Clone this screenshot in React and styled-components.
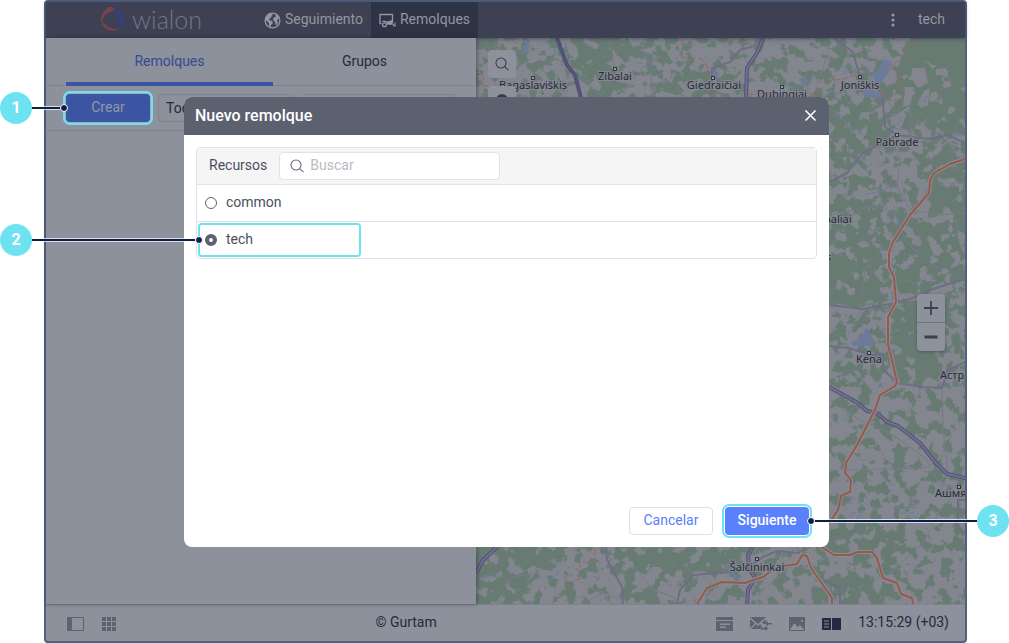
import React, { useState } from "react";
import styled, { createGlobalStyle, css } from "styled-components";

const GlobalStyle = createGlobalStyle`
  * { box-sizing: border-box; }
  body { margin: 0; background: #fff; font-family: Roboto, "Liberation Sans", sans-serif; font-size: 14px; line-height: 20px; color: #4a4f60; overflow-x: hidden; }
  button, input, select { font: inherit; margin: 0; }
  svg { display: block; }
`;

const cyan = "#6fe2f2";
const navy = "#0b1f4b";
const dim = "#8d919b";
const ink = "#232a3f";

/* ---------- frame ---------- */
const Window = styled.div`
  position: relative;
  display: flex;
  flex-direction: column;
  min-height: 100vh;
  margin: 0 42px 0 44px;
  border: 2px solid #50617f;
  border-radius: 4px;
  background: ${dim};
`;

const TopBar = styled.header`
  position: relative;
  z-index: 1;
  display: flex;
  align-items: stretch;
  height: 36px;
  padding: 0 20px 0 54px;
  background: #3d4153;
  box-shadow: 0 1px 4px rgba(30, 34, 50, 0.5);
  color: #9397a1;
`;

const Brand = styled.a`
  display: flex;
  align-items: center;
  gap: 8px;
  width: 156px;
  padding-bottom: 2px;
  color: #737783;
  font: 300 25px/34px Lato, sans-serif;
  text-decoration: none;
`;

const NavLink = styled.a`
  display: flex;
  align-items: center;
  gap: 4px;
  padding: 0 8px;
  color: inherit;
  text-decoration: none;
  background: ${(p) => (p.$active ? "#2e3346" : "transparent")};
`;

const NavText = styled.span`
  padding-bottom: 2px;
`;

const UserArea = styled.div`
  display: flex;
  align-items: center;
  gap: 23px;
  margin-left: auto;
`;

const PlainButton = styled.button`
  display: flex;
  align-items: center;
  justify-content: center;
  padding: 0;
  border: 0;
  background: none;
  color: inherit;
`;

const Workspace = styled.main`
  display: flex;
  flex: 1;
`;

/* ---------- side panel ---------- */
const SidePanel = styled.section`
  flex: 0 0 auto;
  width: 430px;
  z-index: 1;
  box-shadow: 1px 0 4px rgba(30, 34, 50, 0.5);
  background: ${dim};
`;

const TabList = styled.div`
  display: flex;
  height: 48px;
  padding: 0 20px;
  border-bottom: 1px solid #7e838e;
`;

const Tab = styled.button`
  flex: ${(p) => (p.$active ? "0 0 207px" : "1")};
  height: 48px;
  padding: 2px 0 0;
  border: 0;
  border-bottom: 4px solid ${(p) => (p.$active ? "#3b55a3" : "transparent")};
  background: none;
  color: ${(p) => (p.$active ? "#364a93" : ink)};
`;

const Toolbar = styled.div`
  display: flex;
  gap: 8px;
  padding: 8px 20px;
  border-bottom: 1px solid #7e838e;
`;

const DimSelect = styled.select`
  width: 137px;
  height: 28px;
  padding: 0 7px;
  border: 1px solid #7e838e;
  border-radius: 4px;
  appearance: none;
  background: ${dim};
  color: ${ink};
`;

const DimInput = styled.input`
  flex: 1;
  width: 0;
  min-width: 0;
  height: 28px;
  padding: 0 8px;
  border: 1px solid #7e838e;
  border-radius: 4px;
  background: ${dim};
`;

/* ---------- numbered callouts ---------- */
const ring = css`
  box-shadow: 0 0 0 1px ${(p) => (p.$dim ? "#a5a8b0" : "#fff")}, 0 0 0 3px ${cyan};
`;

const Target = styled.div`
  position: relative;
`;

const CalloutBox = styled.div`
  position: absolute;
  z-index: 3;
  top: 50%;
  ${(p) => (p.$side === "left" ? "right" : "left")}: calc(100% - ${(p) => p.$overlap}px);
  display: flex;
  flex-direction: ${(p) => (p.$side === "left" ? "row" : "row-reverse")};
  align-items: center;
  width: ${(p) => p.$reach}px;
  transform: translateY(-50%);
  pointer-events: none;
`;

const Badge = styled.span`
  flex: none;
  width: 32px;
  height: 32px;
  border-radius: 50%;
  background: ${cyan};
  color: #fff;
  font: 700 16px/32px Roboto, sans-serif;
  text-align: center;
`;

const Lead = styled.span`
  flex: 1;
  height: 2px;
  background: ${navy};
  box-shadow: 0 1px 0 rgba(255, 255, 255, 0.7), 0 -1px 0 rgba(255, 255, 255, 0.7);
`;

const Dot = styled.span`
  flex: none;
  width: 8px;
  height: 8px;
  border: 1px solid #fff;
  border-radius: 50%;
  background: ${navy};
`;

function Callout({ number, side, reach, overlap }) {
  return (
    <CalloutBox $side={side} $reach={reach} $overlap={overlap}>
      <Badge>{number}</Badge>
      <Lead />
      <Dot />
    </CalloutBox>
  );
}

/* ---------- buttons ---------- */
const variants = {
  dimmed: css`border: 0; background: #3b55a3; color: #9297a8;`,
  outline: css`border: 1px solid #dfe0e3; background: #fff; color: #587ffb;`,
  primary: css`border: 0; background: #5a81fb; color: #fff; font-weight: 500;`,
};

const Button = styled.button`
  display: block;
  width: 84px;
  height: 28px;
  padding: 0 0 2px;
  border-radius: 4px;
  ${(p) => variants[p.$variant]}
  ${(p) => p.$ringed && ring}
`;

/* ---------- map ---------- */
const MapArea = styled.section`
  position: relative;
  flex: 1;
  min-width: 0;
  overflow: hidden;
  background: #83868f;
`;

const MapDrawing = styled.svg`
  position: absolute;
  inset: 0;
  width: 100%;
  height: 100%;
`;

const MapTools = styled.div`
  position: absolute;
  top: 12px;
  left: 12px;
  display: grid;
  gap: 8px;
`;

const ZoomTools = styled.div`
  position: absolute;
  top: 256px;
  right: 20px;
  display: grid;
  gap: 1px;
  border-radius: 4px;
  overflow: hidden;
  background: #70747f;
  box-shadow: 0 1px 3px rgba(30, 34, 50, 0.4);
`;

const MapButton = styled.button`
  display: grid;
  place-items: center;
  width: 28px;
  height: 28px;
  padding: 0;
  border: 0;
  border-radius: ${(p) => (p.$joined ? 0 : 4)}px;
  background: ${dim};
  color: #3a3f52;
`;

/* ---------- status bar ---------- */
const StatusBar = styled.footer`
  display: flex;
  align-items: center;
  height: 37px;
  padding: 2px 16px 0 21px;
  border-top: 1px solid #7e838e;
  color: ${ink};
`;

const StatusGroup = styled.div`
  display: flex;
  align-items: center;
  gap: ${(p) => p.$gap}px;
  color: #5e626e;
`;

const Copyright = styled.span`
  flex: 1;
  padding: 0 20px 4px 0;
  text-align: center;
`;

const Clock = styled.time`
  padding-bottom: 4px;
  color: ${ink};
`;

/* ---------- dialog ---------- */
const Overlay = styled.div`
  position: absolute;
  inset: 0;
  z-index: 2;
  display: flex;
  align-items: center;
  justify-content: center;
  padding-left: 2px;
  pointer-events: none;
`;

const Dialog = styled.section`
  display: flex;
  flex-direction: column;
  width: 645px;
  min-height: 450px;
  border-radius: 8px;
  background: #fff;
  pointer-events: auto;
`;

const DialogHeader = styled.header`
  display: flex;
  align-items: center;
  justify-content: space-between;
  height: 38px;
  padding: 0 12px 0 11px;
  border-radius: 8px 8px 0 0;
  background: #5c6170;
  color: #fff;
`;

const DialogTitle = styled.h1`
  margin: 0;
  font-size: 16px;
  font-weight: 500;
  line-height: 20px;
`;

const DialogBody = styled.div`
  flex: 1;
  padding: 12px;
`;

const ResourceList = styled.fieldset`
  min-width: 0;
  margin: 0;
  padding: 0;
  border: 1px solid #e2e2e4;
  border-radius: 4px;
`;

const ListHeader = styled.div`
  display: flex;
  align-items: center;
  gap: 12px;
  height: 36px;
  padding: 0 12px;
  background: #f5f5f5;
`;

const ListTitle = styled.span`
  padding-bottom: 2px;
`;

const SearchField = styled.label`
  display: flex;
  align-items: center;
  gap: 5px;
  width: 221px;
  height: 28px;
  padding: 0 9px;
  border: 1px solid #e2e2e4;
  border-radius: 4px;
  background: #fff;
  color: #6b6f7c;
`;

const SearchInput = styled.input`
  flex: 1;
  min-width: 0;
  padding: 0 0 2px;
  border: 0;
  outline: 0;
  background: none;
  &::placeholder { color: #b9bbc2; opacity: 1; }
`;

const ResourceRow = styled.div`
  height: 37px;
  padding: 2px 1px;
  border-top: 1px solid #e2e2e4;
`;

const ResourceOption = styled.label`
  position: relative;
  display: flex;
  align-items: center;
  gap: 9px;
  width: 163px;
  height: 34px;
  padding: 0 5px 2px;
  border: 2px solid ${(p) => (p.$ringed ? cyan : "transparent")};
  border-radius: 4px;
  margin-top: -1px;
`;

const Radio = styled.input`
  flex: none;
  appearance: none;
  width: 12px;
  height: 12px;
  margin: 2px 0 0;
  border: 1px solid #5c6170;
  border-radius: 50%;
  background: #fff;
  &:checked { border-width: 4px; }
`;

const DialogFooter = styled.footer`
  display: flex;
  justify-content: flex-end;
  gap: 12px;
  padding: 0 20px 12px;
`;

/* ---------- icons ---------- */
const LogoMark = () => (
  <svg width="24" height="26" viewBox="0 0 24 26" aria-hidden="true">
    <path d="M12 1C8 0 3 5 1 12C0 16 1 18 2 16C3 11 7 6 13 5C15 4 15 2 12 1Z" fill="#77424f" />
    <path d="M14 1C19 3 23 9 23 16C23 20 20 22 19 19C20 13 18 7 14 3Z" fill="#343f86" />
    <path d="M2 17C4 15 6 20 11 22C15 24 19 22 20 22C17 25 11 26 6 23C3 21 1 18 2 17Z" fill="#77424f" />
  </svg>
);

const GlobeIcon = () => (
  <svg width="17" height="17" viewBox="0 0 17 17" aria-hidden="true">
    <circle cx="8.500" cy="8.500" r="7.400" fill="none" stroke="currentColor" strokeWidth="1.300" />
    <path d="M2 5L5 2L8 2L9 3L7 4L8 5L6 6L5 8L8 9L9 11L7 13L7 15L5 14L5 11L3 9L1 8ZM11 2L14 4L15 7L14 7L13 9L14 10L13 13L12 13L11 10L9 8L10 5L12 5Z" fill="currentColor" />
  </svg>
);

const TrailerIcon = () => (
  <svg width="17" height="15" viewBox="0 0 17 15" fill="none" stroke="currentColor" aria-hidden="true">
    <path d="M2.500 10.500H1V1.500H13.500V10" strokeWidth="1.300" />
    <path d="M2 8.500H3L4.500 7.500L8.500 8.500L13 7V11.500H8L7.500 9.500Z" fill="currentColor" stroke="none" />
    <circle cx="5.500" cy="11.700" r="1.900" strokeWidth="1.300" />
    <path d="M9 11H14.500V13H16.400M16 9.500V13" strokeWidth="1" />
  </svg>
);

const DotsIcon = () => (
  <svg width="4" height="14" viewBox="0 0 4 14" fill="currentColor" aria-hidden="true">
    <circle cx="2" cy="2" r="1.600" /><circle cx="2" cy="7" r="1.600" /><circle cx="2" cy="12" r="1.600" />
  </svg>
);

const SearchIcon = () => (
  <svg width="16" height="16" viewBox="0 0 16 16" fill="none" stroke="currentColor" strokeWidth="1.100" aria-hidden="true">
    <circle cx="7" cy="7" r="5" /><path d="M10.600 10.600L14.500 14.200" />
  </svg>
);

const CloseIcon = () => (
  <svg width="13" height="13" viewBox="0 0 13 13" stroke="currentColor" strokeWidth="1.600" aria-hidden="true">
    <path d="M1.500 1.500L11.500 11.500M11.500 1.500L1.500 11.500" />
  </svg>
);

const SidebarIcon = () => (
  <svg width="17" height="14" viewBox="0 0 17 14" aria-hidden="true">
    <path d="M.5.500H16.500V13.500H.5Z" fill="none" stroke="currentColor" /><path d="M0 0H5V14H0Z" fill="currentColor" />
  </svg>
);

const GridIcon = () => (
  <svg width="14" height="14" viewBox="0 0 14 14" fill="currentColor" aria-hidden="true">
    {[0, 5, 10].map((y) => [0, 5, 10].map((x) => <rect key={`${x}-${y}`} x={x} y={y} width="4" height="4" />))}
  </svg>
);

const CardIcon = () => (
  <svg width="17" height="14" viewBox="0 0 17 14" aria-hidden="true">
    <path fillRule="evenodd" d="M0 0H17V3H0ZM0 4H17V14H0ZM4 6.500V8H14V6.500ZM4 9.500V11H10V9.500Z" fill="currentColor" />
  </svg>
);

const MailIcon = () => (
  <svg width="22" height="14" viewBox="0 0 22 14" fill="currentColor" aria-hidden="true">
    <path d="M0 0H16L8 7ZM0 2L5 6.500L0 11ZM6 7.300L8 9L10 7.300L12 8.500L10 12H1ZM16 2V6L14 7.500L12 5.500Z" />
    <path d="M18 4V6H22V7.500H18V9.500L15 6.800ZM15 9V14L18.500 11.500ZM10.500 10.500H15V12.500H10.500Z" />
  </svg>
);

const PictureIcon = () => (
  <svg width="16" height="14" viewBox="0 0 16 14" aria-hidden="true">
    <path fillRule="evenodd" d="M0 0H16V14H0ZM1 12.500L5.500 6L8.500 10L11 8L15 12.500V13H1ZM12 3V5H14V3Z" fill="currentColor" />
  </svg>
);

const PanelsIcon = () => (
  <svg width="19" height="12" viewBox="0 0 19 12" aria-hidden="true">
    <path fillRule="evenodd" d="M0 0H9V12H0ZM2 2.500V3.500H7V2.500ZM2 5.500V6.500H7V5.500ZM2 8.500V9.500H7V8.500ZM10 0H19V12H10Z" fill="#232a3f" />
  </svg>
);

const SignIcon = ({ plus }) => (
  <svg width="14" height="14" viewBox="0 0 14 14" stroke="currentColor" strokeWidth={plus ? 1.8 : 2.8} aria-hidden="true">
    <path d={plus ? "M0 7H14M7 0V14" : "M.5 7H13.500"} />
  </svg>
);

/* ---------- map data ---------- */
const forests = [
  ["M466 28H829V107H466Z", 0.42],
  ["M576 28H622L626 55L618 70L610 107H590L582 70Z", 0.5],
  ["M466 28H500L498 52H466ZM545 45H556L560 60H548Z", 0.5],
  ["M635 38H670V62L655 72L640 60Z", 0.35],
  ["M690 76L725 85L735 97H680Z", 0.35],
  ["M829 28H975V380H829Z", 0.46],
  ["M912 28H975V135L932 130L905 112L898 85L902 60Z", 0.65],
  ["M819 95H880V150L819 185Z", 0.35],
  ["M935 145H975V225L940 220L920 195Z", 0.5],
  ["M819 200L885 195L900 215L880 265H819Z", 0.3],
  ["M905 215L940 225L975 270L950 285L900 290L895 250Z", 0.35],
  ["M819 255L870 260L885 302H819ZM895 305L930 295L950 340L935 380L900 380L890 330Z", 0.6],
  ["M819 380H975V614H819Z", 0.4],
  ["M835 525H880L910 540L900 570L880 580L870 560L829 555Z", 0.4],
  ["M819 570L880 580L895 614H840Z", 0.45],
  ["M466 540H829V614H466Z", 0.4],
  ["M466 540H570L560 566L530 575L520 614H466Z", 0.45],
  ["M610 540H750V570L700 572L620 570Z", 0.45],
  ["M630 585L660 590L670 614H628Z", 0.4],
];

const lakes = [
  "M885 60L892 61L889 72L882 82L876 84L873 75L879 68Z",
  "M858 87L872 90L884 95L880 99L866 97Z",
  "M866 327L872 337L873 346L853 346L851 342L860 338Z",
  "M527 39L530 40L528 52L523 54L524 46Z",
  "M800 79L806 77L808 83L803 86Z",
  "M712 70L719 73L717 78L709 77Z",
  "M725 563L729 564L733 571L740 579L734 578L728 572Z",
];

const streams = [
  "M834 110L838 119L845 120L850 129L847 131M829 91L834 93L836 99",
  "M822 136L832 133M862 164L868 166M860 130L862 135M952 136L963 133",
  "M843 75L848 66L856 70M866 70L871 78L869 88M640 58L648 54",
  "M895 215L905 240L920 255L942 270M865 195L885 190L893 180",
  "M560 570L552 580L545 576M476 578L500 572M645 52L653 66",
];

const highways = [
  "M557 38L567 65L575 75L581 98",
  "M763 38L757 53L747 68L746 98",
  "M829 387L858 403L867 411L877 413L887 422L898 426L920 443L935 462L947 474L965 478",
  "M753 547L748 555L749 568L755 578L748 590L747 604",
  "M498 546L483 560L476 573",
];

const roads = [
  "M834 38L853 52L860 77L882 93L885 127L897 135L930 139L948 135L965 143",
  "M897 135L863 153L847 173L829 182",
  "M829 305L863 309L890 304L910 299L930 290L965 279",
  "M829 346L848 348L868 354L882 356L884 370L897 383L923 387L942 388L948 370L965 362",
  "M606 547L607 560L622 587L623 604",
  "M677 604L680 590L693 575L730 572L747 568L763 557L777 551L800 553",
  "M755 46L740 50L730 62L712 68L712 97",
  "M825 580L840 588L840 604M965 500H958V525L965 535",
];

const paths = [
  "M536 88L556 84L575 75L603 97M615 75L600 97M609 38L615 70M640 48L650 65L653 97",
  "M829 52L820 75L790 90M882 93L905 125M911 110L910 130L890 128",
  "M829 215L880 205L895 215M897 135L900 160L897 185L910 210L940 215L965 213",
  "M885 245L865 270L861 300M861 309L848 335M829 400L860 420L880 428L900 440L925 458L940 485L958 486",
  "M847 470L925 468L933 463M942 388L943 430L948 474M843 420L858 403",
  "M885 577L910 555L925 540L940 510L950 500M640 575L655 590L675 598",
  "M500 604L510 578L540 572L560 548M585 602L605 593L622 600",
];

const mainRoads = [
  "M965 159L950 164L934 173L930 180L929 193L910 215L893 242L889 253L889 267L894 277L896 302L888 317L888 345L892 360L897 382L895 386L880 395L875 410L857 445L846 463L845 473L851 480L850 492L841 496L838 510L828 525",
  "M820 546L834 555L850 555L858 552L872 552L877 558L883 578L897 583L901 594L912 598L913 604",
  "M697 604L707 588L722 582L745 583L763 577L777 567L797 564L802 555L807 556L811 568L825 588L832 598V604",
];

const borders = [
  "M682 38V58H700L707 66L710 76L706 92L712 97",
  "M915 38V48H903V60L892 64V70H901L895 88L905 93L902 100H887L882 92L868 86L855 75L843 79L827 81L817 82V94H740",
  "M476 74L484 75L482 85L490 86L484 97",
  "M595 549V562H580V572L582 578L570 582L567 592L552 603",
];

const places = [
  ["Bagaslaviškis", 533, 89, 533, 78],
  ["Zibalai", 615, 80, 615, 69],
  ["Giedraičiai", 714, 89, 713, 78],
  ["Dubingiai", 782, 98, 782, 87],
  ["Joniškis", 860, 89, 860, 77],
  ["Pabradė", 897, 146, 897, 135],
  ["Kena", 869, 363, 869, 353],
  ["Šalčininkai", 757, 571, 757, 559],
];

const edgePlaces = [
  ["baliai", 824, 223],
  ["s", 826, 261],
  ["Астр", 940, 379],
  ["Ашмя", 935, 497],
];

function MapPicture() {
  return (
    <MapDrawing viewBox="476 38 489 566" preserveAspectRatio="xMidYMid slice" role="img" aria-label="Mapa">
      <defs>
        <filter id="woods" filterUnits="userSpaceOnUse" x="466" y="28" width="509" height="586" colorInterpolationFilters="sRGB">
          <feGaussianBlur in="SourceAlpha" stdDeviation="3" result="density" />
          <feTurbulence type="fractalNoise" baseFrequency="0.085" numOctaves="4" seed="8" result="noise" />
          <feComposite in="noise" in2="density" operator="arithmetic" k2="1" k3="0.500" k4="-0.250" />
          <feComponentTransfer result="mask"><feFuncA type="linear" slope="14" intercept="-6.500" /></feComponentTransfer>
          <feFlood floodColor="#687b73" />
          <feComposite in2="mask" operator="in" />
        </filter>
      </defs>
      <g filter="url(#woods)">
        {forests.map(([d, o], i) => <path key={i} d={d} fillOpacity={o} />)}
      </g>
      <g fill="#83868f">
        <path d="M912 68H925L928 83L918 88L911 78ZM936 69L946 68V75H936ZM905 87H914L910 105L903 107ZM924 91L930 88L928 106L917 105Z" />
        <path d="M904 168L914 169L917 176L910 179L902 175Z" />
      </g>
      <g fill="#6c7b9b">{lakes.map((d) => <path key={d} d={d} />)}</g>
      <g fill="none" stroke="#6c7b9b" strokeWidth="1">{streams.map((d) => <path key={d} d={d} />)}</g>
      <g fill="none" stroke="#6c7b9b" strokeDasharray="5 3">
        <path d="M850 498H868M848 503H865M851 513H865M849 516H863M903 508H920M901 513H919M905 516H916M890 485H896M889 490H893M943 562H951M945 567H950M893 350H899M894 361H898M950 152H960M948 157H963M925 97H930M922 101H928M638 63H647M643 67H650" />
      </g>
      <g fill="none" stroke="#767a88" strokeWidth="1">{paths.map((d) => <path key={d} d={d} />)}</g>
      <g fill="none" stroke="#6d6e85" strokeWidth="2" strokeLinejoin="round">{roads.map((d) => <path key={d} d={d} />)}</g>
      <g fill="none" stroke="#916861" strokeWidth="1" strokeDasharray="7 2">{borders.map((d) => <path key={d} d={d} />)}</g>
      <g fill="none" stroke="#535277" strokeWidth="4" strokeLinejoin="round">{highways.map((d) => <path key={d} d={d} />)}</g>
      <g fill="none" stroke="#706f90" strokeWidth="2">{highways.slice(1).map((d) => <path key={d} d={d} />)}</g>
      <g fill="none" stroke="#8f8b8e" strokeWidth="4" strokeLinejoin="round">{mainRoads.map((d) => <path key={d} d={d} />)}</g>
      <g fill="none" stroke="#93594f" strokeWidth="2" strokeLinejoin="round">{mainRoads.map((d) => <path key={d} d={d} />)}</g>
      <g fontFamily='"Noto Sans", sans-serif' fontSize="11" fill="#252836" stroke="#858891" strokeWidth="2" paintOrder="stroke" strokeLinejoin="round">
        {places.map(([name, x, y]) => <text key={name} x={x} y={y} textAnchor="middle">{name}</text>)}
        {edgePlaces.map(([name, x, y]) => <text key={name} x={x} y={y}>{name}</text>)}
      </g>
      <g fill="#9a9ca3" stroke="#343747">
        {places.map(([name, , , x, y]) => <rect key={name} x={x - 1.5} y={y - 1.5} width="3" height="3" />)}
        <rect x="957.500" y="485.500" width="3" height="3" />
      </g>
    </MapDrawing>
  );
}

export default function App() {
  const [resource, setResource] = useState("tech");
  const [query, setQuery] = useState("");
  return (
    <>
      <GlobalStyle />
      <Window>
        <TopBar>
          <Brand href="#"><LogoMark />wialon</Brand>
          <NavLink href="#"><GlobeIcon /><NavText>Seguimiento</NavText></NavLink>
          <NavLink href="#" $active><TrailerIcon /><NavText>Remolques</NavText></NavLink>
          <UserArea>
            <PlainButton aria-label="Más"><DotsIcon /></PlainButton>
            <PlainButton><NavText>tech</NavText></PlainButton>
          </UserArea>
        </TopBar>

        <Workspace>
          <SidePanel>
            <TabList role="tablist">
              <Tab role="tab" aria-selected="true" $active>Remolques</Tab>
              <Tab role="tab" aria-selected="false">Grupos</Tab>
            </TabList>
            <Toolbar>
              <Target>
                <Button $variant="dimmed" $ringed $dim>Crear</Button>
                <Callout number={1} side="left" reach={68} overlap={2} />
              </Target>
              <DimSelect aria-label="Filtro"><option>Todos</option></DimSelect>
              <DimInput type="text" aria-label="Buscar remolque" />
            </Toolbar>
          </SidePanel>
          <MapArea>
            <MapPicture />
            <MapTools>
              <MapButton aria-label="Buscar en el mapa"><SearchIcon /></MapButton>
              <MapButton aria-label="Capas">
                <svg width="14" height="14" viewBox="0 0 14 14"><circle cx="7" cy="7" r="6" fill="#343a55" /></svg>
              </MapButton>
            </MapTools>
            <ZoomTools>
              <MapButton $joined aria-label="Acercar"><SignIcon plus /></MapButton>
              <MapButton $joined aria-label="Alejar"><SignIcon /></MapButton>
            </ZoomTools>
          </MapArea>
        </Workspace>

        <StatusBar>
          <StatusGroup $gap={18}>
            <PlainButton aria-label="Panel lateral"><SidebarIcon /></PlainButton>
            <PlainButton aria-label="Aplicaciones"><GridIcon /></PlainButton>
          </StatusGroup>
          <Copyright>© Gurtam</Copyright>
          <StatusGroup $gap={17}>
            <PlainButton aria-label="Notificaciones"><CardIcon /></PlainButton>
            <PlainButton aria-label="Mensajes"><MailIcon /></PlainButton>
            <PlainButton aria-label="Imágenes"><PictureIcon /></PlainButton>
            <PlainButton aria-label="Paneles"><PanelsIcon /></PlainButton>
            <Clock>13:15:29 (+03)</Clock>
          </StatusGroup>
        </StatusBar>

        <Overlay>
          <Dialog role="dialog" aria-labelledby="dialog-title">
            <DialogHeader>
              <DialogTitle id="dialog-title">Nuevo remolque</DialogTitle>
              <PlainButton aria-label="Cerrar"><CloseIcon /></PlainButton>
            </DialogHeader>
            <DialogBody>
              <ResourceList aria-label="Recursos">
                <ListHeader>
                  <ListTitle>Recursos</ListTitle>
                  <SearchField>
                    <SearchIcon />
                    <SearchInput aria-label="Buscar" placeholder="Buscar" value={query} onChange={(e) => setQuery(e.target.value)} />
                  </SearchField>
                </ListHeader>
                {["common", "tech"].map((name) => (
                  <ResourceRow key={name}>
                    <ResourceOption $ringed={name === "tech"}>
                      <Radio type="radio" name="resource" checked={resource === name} onChange={() => setResource(name)} />
                      {name}
                      {name === "tech" && <Callout number={2} side="left" reach={203} overlap={3} />}
                    </ResourceOption>
                  </ResourceRow>
                ))}
              </ResourceList>
            </DialogBody>
            <DialogFooter>
              <Button $variant="outline">Cancelar</Button>
              <Target>
                <Button $variant="primary" $ringed>Siguiente</Button>
                <Callout number={3} side="right" reach={202} overlap={2} />
              </Target>
            </DialogFooter>
          </Dialog>
        </Overlay>
      </Window>
    </>
  );
}
